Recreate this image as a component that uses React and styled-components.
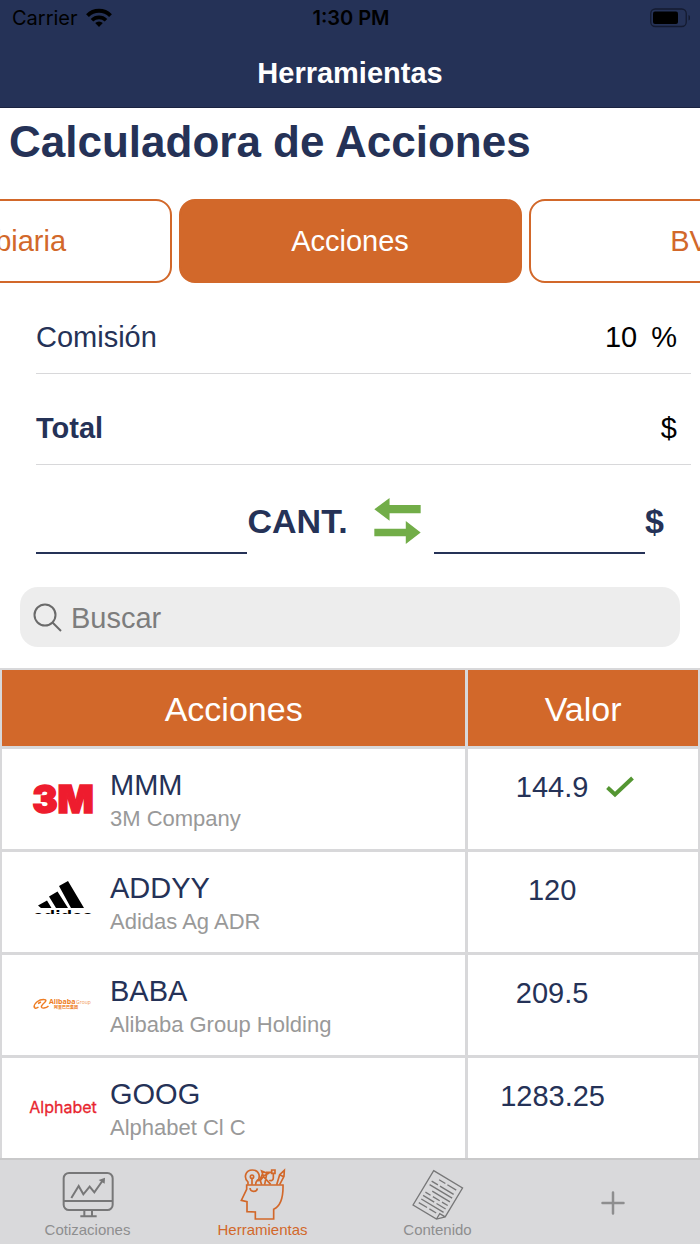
import React, { useState } from 'react';
import styled, { createGlobalStyle } from 'styled-components';

const navy = '#253257';
const orange = '#d2682a';
const line = '#d8d8da';

const GlobalStyle = createGlobalStyle`
  * {
    box-sizing: border-box;
  }

  body {
    margin: 0;
    background-color: #ffffff;
    color: ${navy};
    font-family: "Liberation Sans", Arial, sans-serif;
    font-size: 29px;
  }

  button, input {
    font: inherit;
    color: inherit;
  }
`;

const Screen = styled.div`
  display: flex;
  flex-direction: column;
  min-height: 100vh;
`;

const Header = styled.header`
  background-color: ${navy};
  border-bottom: 1px solid #1b2340;
`;

const StatusBar = styled.div`
  display: grid;
  grid-template-columns: 1fr auto 1fr;
  align-items: center;
  height: 36px;
  padding: 0 10px 0 12px;
  color: #000000;
  font-family: Inter, sans-serif;
  font-size: 20px;
`;

const Carrier = styled.div`
  display: flex;
  align-items: center;
  gap: 8px;
`;

const Clock = styled.time`
  font-weight: 600;
`;

const Battery = styled.svg`
  justify-self: end;
`;

const NavTitle = styled.div`
  padding: 22px 0 18px;
  color: #ffffff;
  font-weight: bold;
  line-height: 31px;
  text-align: center;
`;

const Title = styled.h1`
  margin: 0;
  padding: 8px 9px 32px;
  font-size: 44px;
  line-height: 51px;
`;

const Tabs = styled.nav`
  display: flex;
  justify-content: center;
  gap: 1%;
  overflow: hidden;
`;

const Tab = styled.button`
  flex: 0 0 49%;
  height: 84px;
  border: 2px solid ${orange};
  border-radius: 16px;
  background-color: ${({ $active }) => $active ? orange : '#ffffff'};
  color: ${({ $active }) => $active ? '#ffffff' : orange};
`;

const Field = styled.div`
  display: flex;
  align-items: center;
  gap: 14px;
  height: 91px;
  margin: 0 9px 0 36px;
  padding: 18px 14px 0 0;
  border-bottom: 1px solid ${line};
  color: #000000;
`;

const FieldLabel = styled.label`
  color: ${navy};
  font-weight: ${({ $bold }) => $bold ? 'bold' : 'normal'};
`;

const FieldInput = styled.input`
  flex: 1;
  min-width: 0;
  padding: 0;
  border: none;
  outline: none;
  background: none;
  text-align: right;
`;

const FieldOutput = styled.output`
  flex: 1;
  text-align: right;
`;

const Converter = styled.div`
  display: flex;
  align-items: center;
  height: 89px;
  padding: 0 36px;
  font-size: 34px;
  font-weight: bold;
`;

const Amount = styled.input`
  flex: 1;
  align-self: stretch;
  min-width: 0;
  border: none;
  border-bottom: 2px solid ${navy};
  border-radius: 0;
  outline: none;
  background: none;
`;

const Unit = styled.label`
  padding-top: 22px;
  line-height: 44px;
`;

const SwapButton = styled.button`
  display: flex;
  margin: 0 13px 0 26px;
  padding: 22px 0 0;
  border: none;
  background: none;
`;

const Search = styled.label`
  display: flex;
  align-items: center;
  gap: 9px;
  height: 60px;
  margin: 33px 20px 21px;
  padding: 0 13px;
  border-radius: 18px;
  background-color: #ededed;
`;

const SearchInput = styled.input`
  flex: 1;
  min-width: 0;
  padding: 2px 0 0;
  border: none;
  outline: none;
  background: none;

  &::placeholder {
    color: #7d7d7d;
    opacity: 1;
  }
`;

const Table = styled.table`
  width: 100%;
  border: 2px solid ${line};
  border-bottom: none;
  border-spacing: 0;
  table-layout: fixed;
`;

const HeadCell = styled.th`
  width: ${({ $wide }) => $wide ? '67%' : '33%'};
  height: 79px;
  padding: 2px 0 0;
  border-bottom: 3px solid ${line};
  background-color: ${orange};
  color: #ffffff;
  font-size: 34px;
  font-weight: normal;

  &:first-child {
    border-right: 3px solid ${line};
  }
`;

const Cell = styled.td`
  padding: 0;
  border-bottom: 3px solid ${line};
  vertical-align: top;
  line-height: 34px;

  &:first-child {
    border-right: 3px solid ${line};
  }

  tr:last-child > & {
    border-bottom: none;
  }
`;

const Stock = styled.div`
  display: flex;
  align-items: center;
  gap: 12px;
  height: 100px;
  padding-left: 26px;
`;

const Symbol = styled.div`
  padding-top: 6px;
`;

const Company = styled.div`
  color: #999999;
  font-size: 22px;
`;

const Price = styled.div`
  display: grid;
  grid-template-columns: 104px 28px;
  justify-content: center;
  align-items: center;
  gap: 2px;
  padding: 21px 32px 0 0;
  text-align: center;
`;

const TabBar = styled.nav`
  position: sticky;
  bottom: 0;
  display: flex;
  height: 86px;
  margin-top: auto;
  border-top: 2px solid #c9c9ca;
  background-color: #d9d9db;
`;

const TabLink = styled.a`
  display: flex;
  flex: 1;
  flex-direction: column;
  align-items: center;
  justify-content: center;
  gap: 1px;
  padding-top: 2px;
  color: ${({ $active }) => $active ? orange : '#8e8e8f'};
  font-size: 15px;
  line-height: 18px;
  text-decoration: none;
`;

const WifiIcon = () => (
  <svg width="26" height="20" viewBox="0 0 26 20" fill="none" stroke="#000" strokeWidth="4">
    <path d="M1.500 7.600a16.300 16.300 0 0 1 23 0" />
    <path d="M6 12.200a10 10 0 0 1 14 0" strokeWidth="3.600" />
    <path d="M13 19l-3.800-3.900a5.400 5.400 0 0 1 7.600 0z" fill="#000" stroke="none" />
  </svg>
);

const BatteryIcon = () => (
  <Battery width="40" height="20" viewBox="0 0 40 20">
    <rect x="0.750" y="1" width="35.500" height="17.500" rx="4.500" fill="none" stroke="#141b31" strokeWidth="1.300" />
    <rect x="3" y="3.500" width="25" height="12.500" rx="2" />
    <path d="M38.500 7c2.600 1 2.600 4.500 0 5.500z" fill="#141b31" />
  </Battery>
);

const SwapIcon = () => (
  <svg width="47" height="46" viewBox="0 0 137 136" fill="#72ad48">
    <path d="M0 33L45 0v21h92v24H45v22z" />
    <path d="M137 102L93 68v23H0v22h93v23z" />
  </svg>
);

const SearchIcon = () => (
  <svg width="29" height="29" viewBox="0 0 29 29" fill="none" stroke="#6a6a6a" strokeWidth="2">
    <circle cx="12" cy="12" r="10.500" />
    <path d="M19.500 19.500l8.500 8.500" />
  </svg>
);

const CheckIcon = () => (
  <svg width="28" height="22" viewBox="0 0 28 22" fill="none" stroke="#549632" strokeWidth="4">
    <path d="M1.500 11.500l7.500 7L26.500 2" />
  </svg>
);

const LogoMmm = () => (
  <svg width="70" height="40" viewBox="0 0 70 40" role="img" aria-label="3M">
    <text
      x="35" y="34" fill="#ee1c2e" stroke="#ee1c2e" strokeWidth="1.500"
      textAnchor="middle" fontFamily="Inter" fontWeight="900" fontSize="38"
    >3M</text>
  </svg>
);

const LogoAdidas = () => (
  <svg width="70" height="42" viewBox="0 0 70 42" role="img" aria-label="adidas">
    <clipPath id="adidas-crop">
      <path d="M0 0h70v33H0z" />
    </clipPath>
    <path d="M31 5L40 0l16 27H43z M21 15.500L29.500 10.500l10.500 16.500H28z M10 24.500L19 19.500l4.500 7.500H13z" />
    <text
      x="5" y="42" clipPath="url(#adidas-crop)"
      fontFamily="Liberation Sans" fontWeight="bold" fontSize="19"
    >adidas</text>
  </svg>
);

const LogoAlibaba = () => (
  <svg width="70" height="14" viewBox="0 0 70 14" role="img" aria-label="Alibaba Group" fill="#ee7d23">
    <path
      d="M6 9.500C6 5 11 1.500 15.500 1.500c4 0 2.500 2-.5 4.500-2.500 2.500-2 4.500 1 4 2-.3 3.500-1 4.500-2M6.500 8c-.5 3 2 2.500 4 1M10 5.500l3-1.500"
      fill="none" stroke="#ee7d23" strokeWidth="1.400"
    />
    <text x="21" y="6" fontFamily="Open Sans" fontWeight="bold" fontSize="7">Alibaba</text>
    <text x="48" y="6" fontFamily="Open Sans" fontSize="5" opacity="0.800">Group</text>
    <text x="26" y="11" fontFamily="Noto Sans CJK SC" fontWeight="bold" fontSize="4">阿里巴巴集团</text>
  </svg>
);

const LogoAlphabet = () => (
  <svg width="70" height="24" viewBox="0 0 70 24" role="img" aria-label="Alphabet">
    <text
      x="35" y="17" fill="#e8252f" stroke="#e8252f" strokeWidth="0.300"
      textAnchor="middle" fontFamily="Inter" fontSize="16"
    >Alphabet</text>
  </svg>
);

const MonitorIcon = () => (
  <svg width="52" height="52" viewBox="186 54 156 156" fill="none" stroke="#777778" strokeWidth="6">
    <rect x="191" y="69" width="147" height="111" rx="16" />
    <path d="M191 153h147M253 180v19M276 180v19M241 199h49" />
    <path d="M214 144l22-36 14 25 19-23 14 17 24-34" />
    <path d="M315 83l-1 18-18-11z" fill="#777778" stroke="none" />
  </svg>
);

const HeadIcon = () => (
  <svg width="52" height="52" viewBox="710 54 156 156" fill="none" stroke={orange} strokeWidth="5">
    <path d="M848 105H739v13l-16 33 17 4v30l25 1v21h55v-29c20-9 29-38 28-73z" />
    <path d="M749 114c1 13 20 14 22 1" />
    <path d="M743 104v-8c-14-13-8-36 13-36 19 0 26 18 16 34" />
    <circle cx="755" cy="80" r="5" />
    <path d="M755 86v18M766 104c0-10 8-20 14-12l4 12" />
    <path d="M784 63l19 8-14 7zM786 73l-8 18M799 72l-6 32M789 79l22 24M778 94l10-12" />
    <path d="M814 60h10v10h-10zM797 67h17M819 70v14c0 8-8 10-12 6" />
    <path d="M829 104l9-30 14-13-1 18-13 25M838 74l12 6" />
  </svg>
);

const DocumentIcon = () => (
  <svg width="52" height="52" viewBox="186 54 156 156" fill="none" stroke="#777778" strokeWidth="4">
    <g transform="translate(251 62) rotate(31)">
      <path d="M0 0h101v101l-19 19H0z M82 120v-19h19" />
      <path
        d="M28 15h22M57 15h31M11 30h22M40 30h48M11 42h79M28 55h62M12 68h18M38 68h24M70 68h20
          M11 80h39M58 80h32M12 92h78M11 105h29M48 105h24"
      />
    </g>
  </svg>
);

const PlusIcon = () => (
  <svg width="24" height="24" viewBox="0 0 24 24" stroke="#8e8e8f" strokeWidth="2.500" strokeLinecap="round">
    <path d="M12 1.500v21M1.500 12h21" />
  </svg>
);

const categories = ['Cambiaria', 'Acciones', 'BVC'];

const stocks = [
  { symbol: 'MMM', company: '3M Company', price: 144.9, Logo: LogoMmm },
  { symbol: 'ADDYY', company: 'Adidas Ag ADR', price: 120, Logo: LogoAdidas },
  { symbol: 'BABA', company: 'Alibaba Group Holding', price: 209.5, Logo: LogoAlibaba },
  { symbol: 'GOOG', company: 'Alphabet Cl C', price: 1283.25, Logo: LogoAlphabet },
];

const StockRow = ({ stock, selected, onSelect }) => {
  const { symbol, company, price, Logo } = stock;

  return (
    <tr onClick={onSelect}>
      <Cell>
        <Stock>
          <Logo />
          <Symbol>
            <div>{symbol}</div>
            <Company>{company}</Company>
          </Symbol>
        </Stock>
      </Cell>
      <Cell>
        <Price>
          <span>{price}</span>
          {selected && <CheckIcon />}
        </Price>
      </Cell>
    </tr>
  )
};

export default function App() {
  const [category, setCategory] = useState('Acciones');
  const [commission, setCommission] = useState('10');
  const [quantity, setQuantity] = useState('');
  const [money, setMoney] = useState('');
  const [query, setQuery] = useState('');
  const [selected, setSelected] = useState('MMM');

  const swap = () => {
    setQuantity(money);
    setMoney(quantity);
  }

  const found = stocks.filter(({ symbol, company }) =>
    `${symbol} ${company}`.toLowerCase().includes(query.toLowerCase()));

  return (
    <Screen>
      <GlobalStyle />
      <Header>
        <StatusBar>
          <Carrier>
            Carrier
            <WifiIcon />
          </Carrier>
          <Clock>1:30 PM</Clock>
          <BatteryIcon />
        </StatusBar>
        <NavTitle>Herramientas</NavTitle>
      </Header>
      <main>
        <Title>Calculadora de Acciones</Title>
        <Tabs>
          {categories.map(name => (
            <Tab key={name} $active={name === category} onClick={() => setCategory(name)}>
              {name}
            </Tab>
          ))}
        </Tabs>
        <Field>
          <FieldLabel htmlFor="commission">Comisión</FieldLabel>
          <FieldInput
            id="commission"
            value={commission}
            onChange={event => setCommission(event.target.value)}
          />
          <span>%</span>
        </Field>
        <Field>
          <FieldLabel $bold htmlFor="total">Total</FieldLabel>
          <FieldOutput id="total">$</FieldOutput>
        </Field>
        <Converter>
          <Amount id="quantity" value={quantity} onChange={event => setQuantity(event.target.value)} />
          <Unit htmlFor="quantity">CANT.</Unit>
          <SwapButton aria-label="Intercambiar" onClick={swap}>
            <SwapIcon />
          </SwapButton>
          <Amount id="money" value={money} onChange={event => setMoney(event.target.value)} />
          <Unit htmlFor="money">$</Unit>
        </Converter>
        <Search>
          <SearchIcon />
          <SearchInput
            aria-label="Buscar"
            placeholder="Buscar"
            value={query}
            onChange={event => setQuery(event.target.value)}
          />
        </Search>
        <Table>
          <thead>
            <tr>
              <HeadCell $wide>Acciones</HeadCell>
              <HeadCell>Valor</HeadCell>
            </tr>
          </thead>
          <tbody>
            {found.map(stock => (
              <StockRow
                key={stock.symbol}
                stock={stock}
                selected={stock.symbol === selected}
                onSelect={() => setSelected(stock.symbol)}
              />
            ))}
          </tbody>
        </Table>
      </main>
      <TabBar>
        <TabLink href="#cotizaciones">
          <MonitorIcon />
          Cotizaciones
        </TabLink>
        <TabLink href="#herramientas" $active>
          <HeadIcon />
          Herramientas
        </TabLink>
        <TabLink href="#contenido">
          <DocumentIcon />
          Contenido
        </TabLink>
        <TabLink href="#mas" aria-label="Más">
          <PlusIcon />
        </TabLink>
      </TabBar>
    </Screen>
  )
}
